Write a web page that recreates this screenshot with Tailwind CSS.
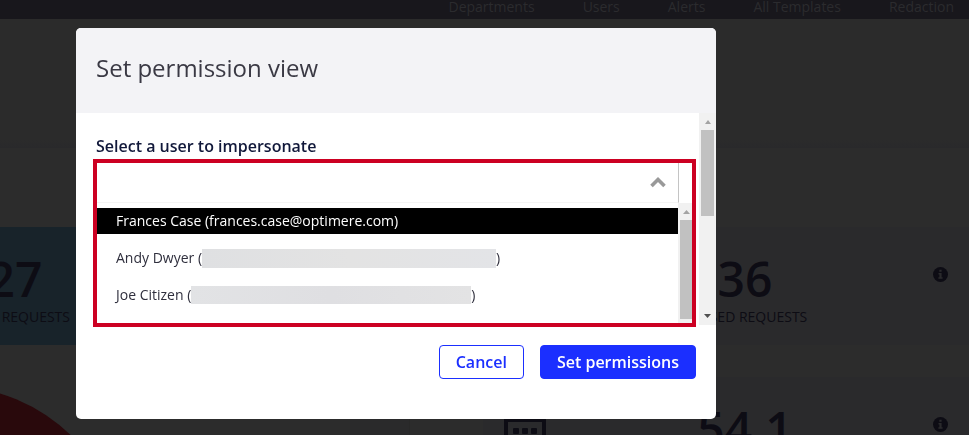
<!DOCTYPE html>
<html lang="en">
  <head>
    <meta charset="UTF-8" />
    <meta name="viewport" content="width=device-width, initial-scale=1.0" />
    <script src="https://cdn.jsdelivr.net/npm/@tailwindcss/browser@4"></script>
    <title>Set permission view</title>
  </head>
  <body class="h-screen overflow-hidden bg-[#2c2c2c] font-['Open_Sans','Noto_Sans',sans-serif] text-sm text-[#0d0c14]">

    <!-- Dashboard behind the dialog -->
    <header>
      <nav class="flex h-[19px] items-start justify-end gap-12 bg-[#18171c] pr-[15px] leading-[14px] text-[#2b2b2e]">
        <a href="#">Departments</a>
        <a href="#">Users</a>
        <a href="#">Alerts</a>
        <a href="#">All Templates</a>
        <a href="#">Redaction</a>
      </nav>
      <div class="flex h-[129px] flex-col justify-end bg-[#2b2b2b]">
        <div class="h-2 bg-linear-to-b from-[#2b2b2b] to-[#29292b]"></div>
      </div>
    </header>

    <main class="flex pt-[79px]">
      <section class="w-[350px] shrink-0">
        <div class="h-[118px] bg-[#18232a] pt-7">
          <p class="-ml-10 w-[110px] text-center text-5xl leading-12 font-semibold">27</p>
          <p class="mt-1 w-[70px] text-right leading-5">REQUESTS</p>
        </div>
        <svg class="mt-8 h-[58px] w-[350px]" viewBox="0 377 350 58">
          <circle cx="-50" cy="559" r="173" fill="#29090c" />
        </svg>
      </section>

      <div class="h-[208px] w-[60px] shrink-0 border-r border-[#282828] bg-[#2a2a2b]"></div>

      <section class="ml-[73px] flex flex-1 flex-col gap-8">
        <div class="flex h-[118px] bg-[#2a2a2c] pr-[21px] pl-[21px]">
          <div class="w-[42px]"></div>
          <div class="flex-1 pt-7 pl-[11px] text-center">
            <p class="text-5xl leading-12 font-semibold">36</p>
            <p class="mt-1 leading-5">CLOSED REQUESTS</p>
          </div>
          <svg class="mt-10 size-[15px]" viewBox="0 0 15 15">
            <circle cx="7.5" cy="7.5" r="7.5" fill="#0d0c14" />
            <path d="M6.3 2.8h2.3v2H6.3zM5.5 6h3.1v4.2h1v1.6H5.4v-1.6h1V7.5h-.9z" fill="#2a2a2c" />
          </svg>
        </div>
        <div class="flex h-[118px] bg-[#2a2a2c] pr-[21px] pl-[21px]">
          <svg class="mt-[42px] h-[42px] w-[42px]" viewBox="0 0 42 42" fill="#0d0c14">
            <path fill-rule="evenodd" d="M0 0h42v42H0zM4 3v35h34V3z" />
            <rect x="9" y="9" width="6" height="6" rx="1" />
            <rect x="18" y="9" width="6" height="6" rx="1" />
            <rect x="27" y="9" width="6" height="6" rx="1" />
          </svg>
          <div class="flex-1 pt-7 pl-[11px] text-center">
            <p class="text-5xl leading-12 font-semibold">54.1</p>
          </div>
          <svg class="mt-10 size-[15px]" viewBox="0 0 15 15">
            <circle cx="7.5" cy="7.5" r="7.5" fill="#0d0c14" />
            <path d="M6.3 2.8h2.3v2H6.3zM5.5 6h3.1v4.2h1v1.6H5.4v-1.6h1V7.5h-.9z" fill="#2a2a2c" />
          </svg>
        </div>
      </section>
    </main>

    <!-- Dialog -->
    <div class="fixed inset-0 pt-7 pl-[76px]">
      <div role="dialog" aria-labelledby="dialog-title" class="w-full max-w-[640px] overflow-hidden rounded-[5px] bg-white">
        <div class="bg-[#f3f3f6] px-5 pt-6 pb-[29px]">
          <h1 id="dialog-title" class="text-2xl leading-8 font-normal text-[#3a3944]">Set permission view</h1>
        </div>

        <div class="flex h-[212px]">
          <div class="flex-1 pt-[21px] pr-[3px] pl-[17px]">
            <label for="user" class="mb-px block pl-[3px] text-base leading-6 font-semibold text-[#11183a]">Select a user to impersonate</label>

            <div class="relative h-[168px] border-4 border-[#cc0022] bg-white">
              <div class="mr-[13px] flex h-10 items-center border-r border-b border-r-[#c4c4c4] border-b-[#f4f4f4]">
                <input id="user" type="text" role="combobox" aria-expanded="true" class="h-full min-w-0 flex-1 px-5 outline-none" />
                <button type="button" aria-label="Close list" class="mr-[11px] p-px">
                  <svg class="h-4 w-4" viewBox="0 0 16 16" fill="none" stroke="#999" stroke-width="3.6">
                    <path d="M1.500 11 8 4.500l6.500 6.500" />
                  </svg>
                </button>
              </div>

              <div class="flex h-[120px]">
                <ul role="listbox" class="flex flex-1 flex-col gap-[11px] pt-[5px] leading-[26px] text-[#2f2f3d]">
                  <li role="option" aria-selected="true" class="bg-black pl-[19px] text-white">Frances Case (frances.case@optimere.com)</li>
                  <li role="option" class="flex items-center pl-[19px]">Andy Dwyer (<span class="h-[19px] w-[294px] bg-linear-to-r from-[#dfe0e2] via-[#e3e3e3] to-[#e3e4e7]"></span>)</li>
                  <li role="option" class="flex items-center pl-[19px]">Joe Citizen (<span class="h-[18px] w-[280px] bg-linear-to-r from-[#e2e3e5] via-[#dfdfe2] to-[#e3e3e4]"></span>)</li>
                </ul>
                <div class="flex w-[14px] flex-col items-end bg-[#f1f1f1]">
                  <svg class="h-[17px] w-3" viewBox="0 0 12 17"><path d="M3 11h7L6.5 7z" fill="#a3a3a3" /></svg>
                  <div class="h-[99px] w-3 bg-[#c1c1c1]"></div>
                </div>
              </div>
            </div>
          </div>

          <div class="flex w-[17px] flex-col items-center bg-[#f1f1f1]">
            <svg class="h-[17px] w-[17px]" viewBox="0 0 17 17"><path d="M6 11h6L9 7z" fill="#a3a3a3" /></svg>
            <div class="h-[86px] w-[13px] bg-[#c1c1c1]"></div>
            <svg class="mt-auto h-[17px] w-[17px]" viewBox="0 0 17 17"><path d="M5 6h7L8.500 10z" fill="#505050" /></svg>
          </div>
        </div>

        <div class="flex justify-end gap-4 px-5 pt-5 pb-10 text-base leading-8 font-semibold">
          <button type="button" class="rounded border border-[#1b2fff] px-4 text-[#1b2fff]">Cancel</button>
          <button type="button" class="rounded border border-[#1b2fff] bg-[#1b2fff] px-4 text-white">Set permissions</button>
        </div>
      </div>
    </div>
  </body>
</html>
